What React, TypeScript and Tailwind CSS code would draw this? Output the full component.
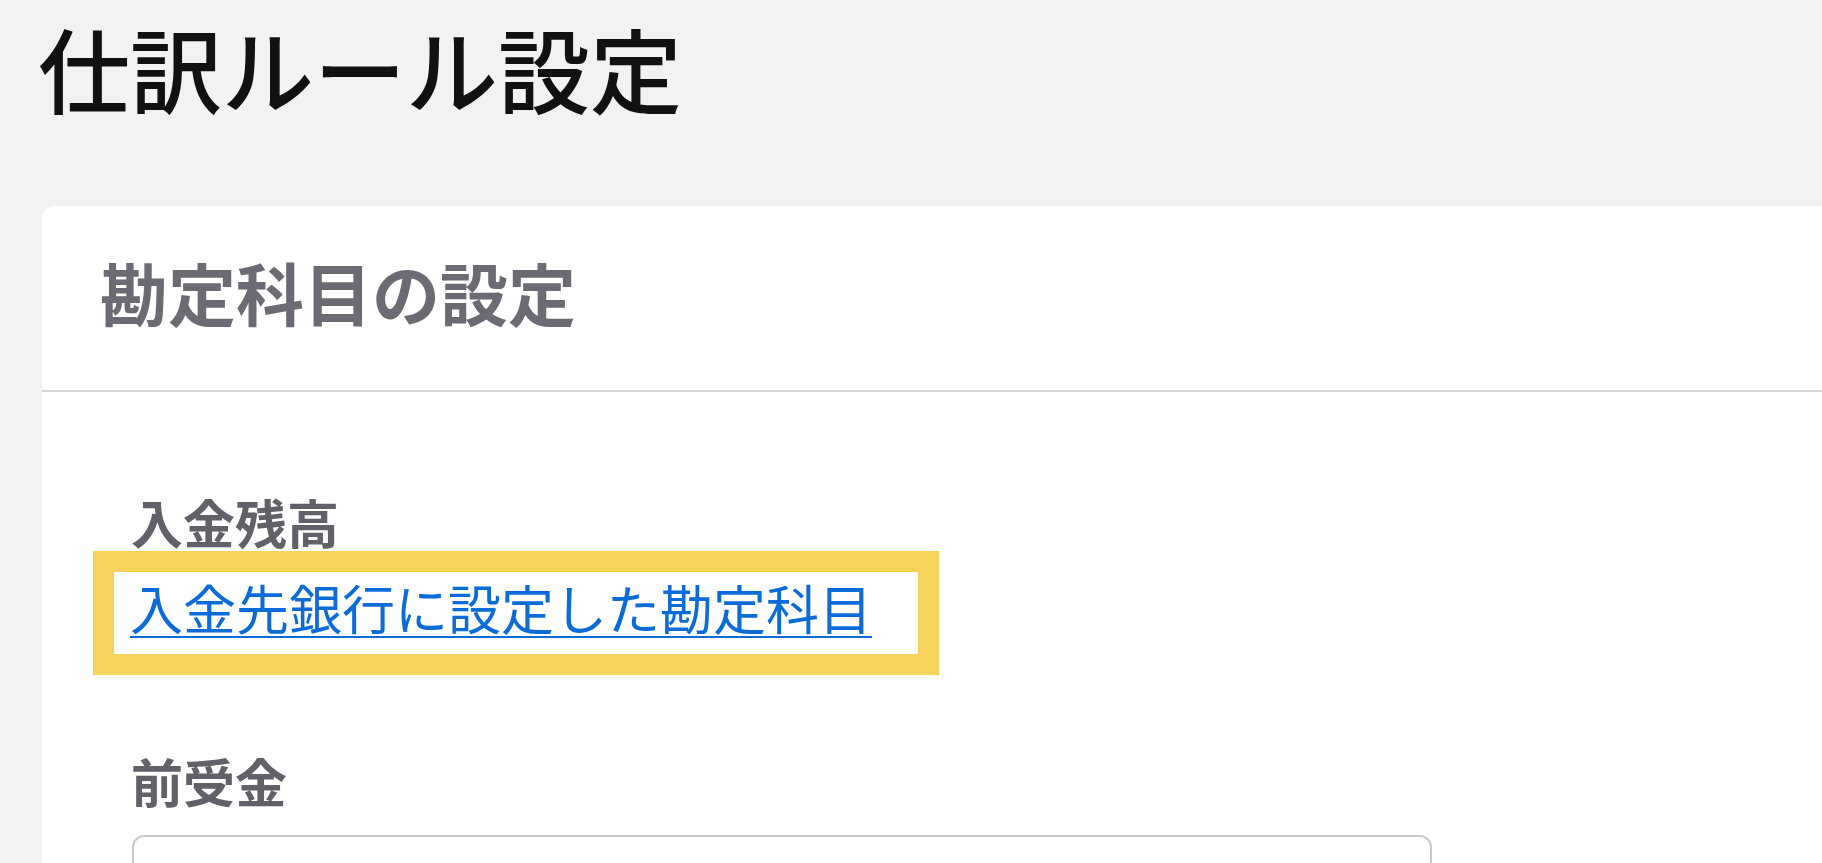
import React from "react";

const jp = "font-['Noto_Sans_CJK_JP','Noto_Sans',sans-serif]";

export default function App() {
    return (
        <div className={`h-screen w-full overflow-hidden bg-[#f2f2f2] ${jp}`}>
            <h1 className="pl-[38px] pt-[21px] text-[92px] leading-none font-medium text-[#111111]">仕訳ルール設定</h1>
            <div className="mt-[93px] ml-[42px] rounded-l-xl bg-white">
                <div className="h-[186px] border-b-2 border-[#d8d8dc] pl-[58px] pt-[52px]">
                    <h2 className="text-[68px] leading-none font-bold text-[#6a6b73]">勘定科目の設定</h2>
                </div>
                <div className="pl-[51px] pb-10">
                    <div className="mt-[104px] pl-[38px] text-[52px] leading-none font-bold text-[#616269]">入金残高</div>
                    <div className="mt-[3px] w-[846px] border-[21px] border-[#f6d45b]">
                        <div className="h-[82px] pl-[16px] pt-[9px]">
                            <a href="#" className="text-[53px] leading-none text-[#0b6bd8] underline decoration-[2px] underline-offset-[6px]">入金先銀行に設定した勘定科目</a>
                        </div>
                    </div>
                    <div className="mt-[80px] pl-[38px] text-[52px] leading-none font-bold text-[#616269]">前受金</div>
                    <div className="mt-[28px] ml-[39px] h-[90px] w-[1300px] rounded-xl border-2 border-[#c9c9c9] bg-white"></div>
                </div>
            </div>
        </div>
    );
}
